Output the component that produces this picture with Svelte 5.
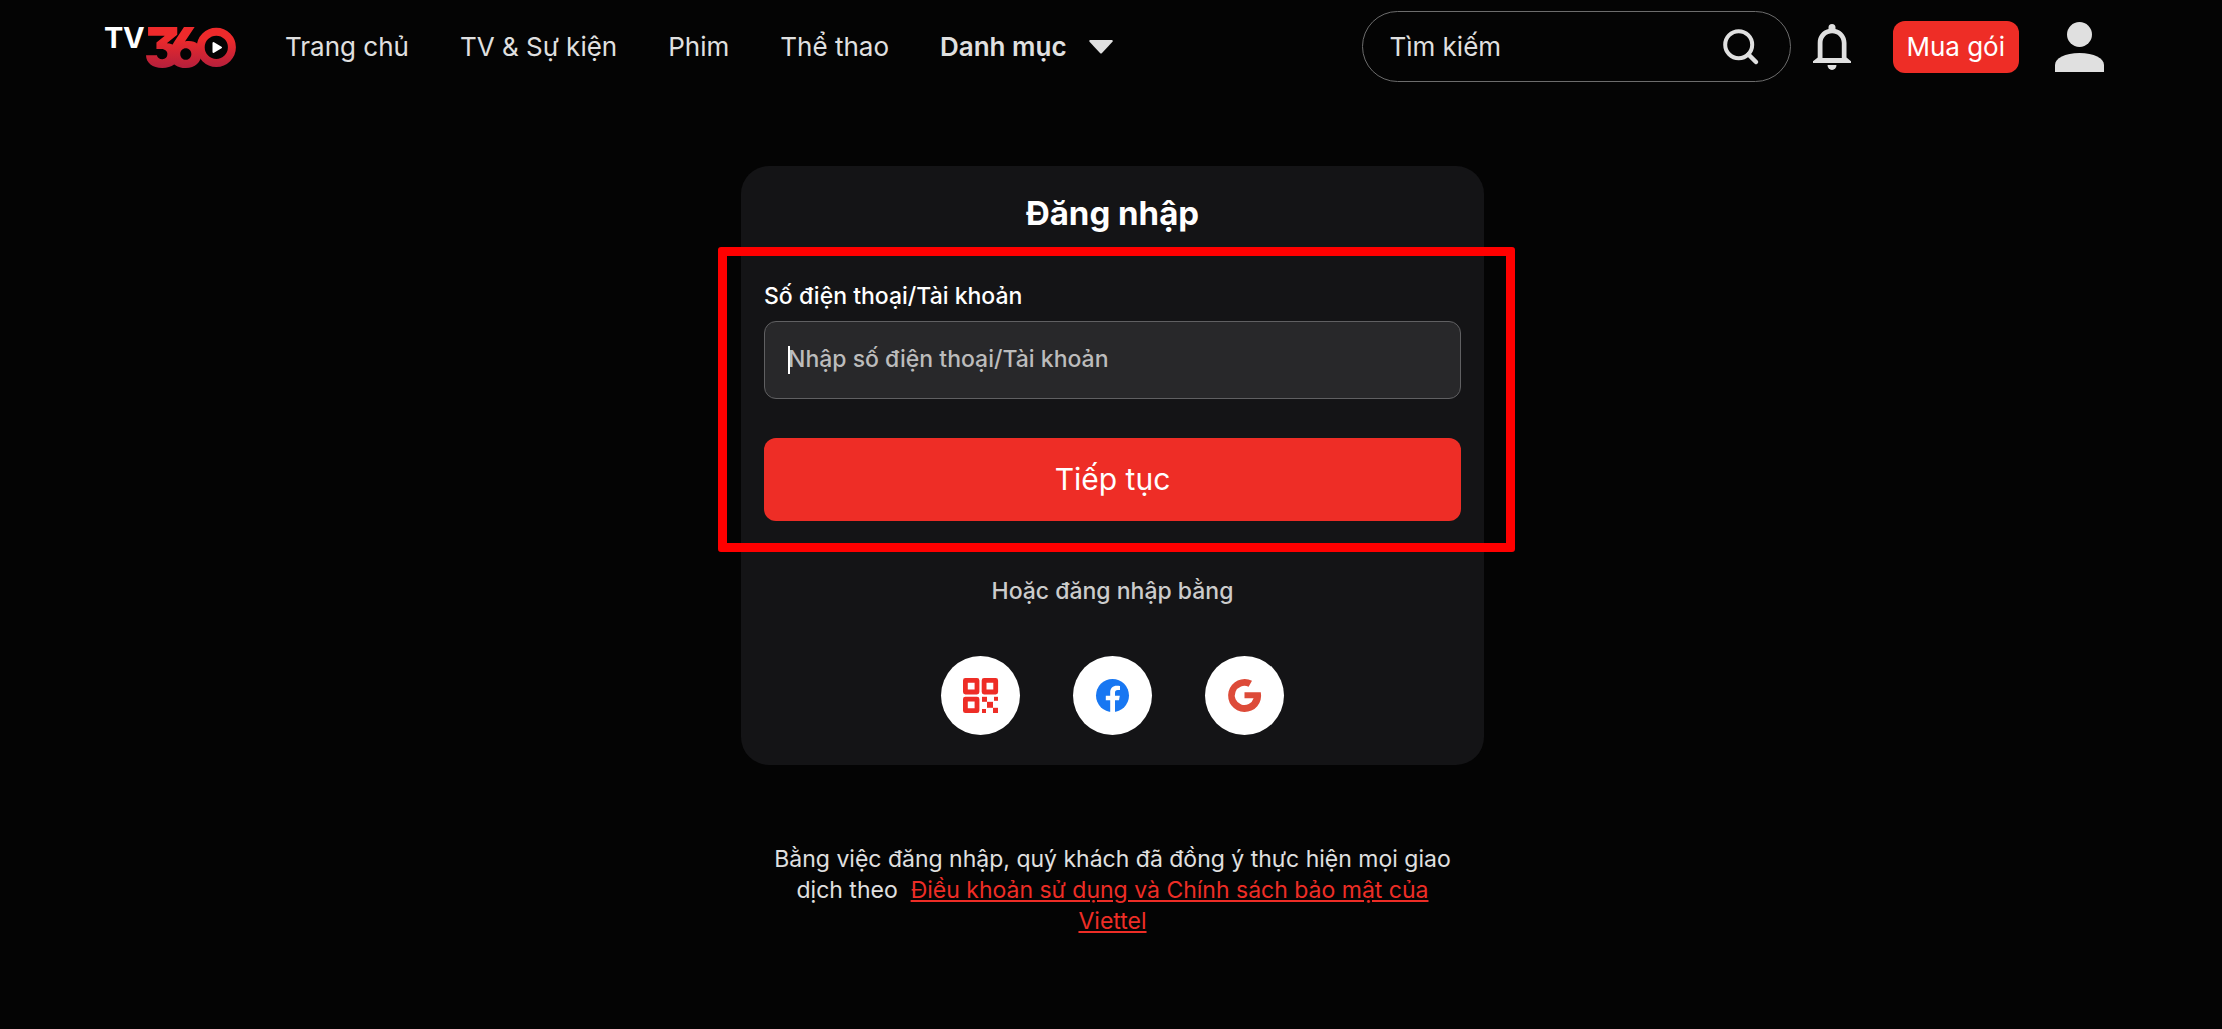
<script lang="ts">
  type NavItem = { label: string; href: string };

  const navItems: NavItem[] = [
    { label: "Trang chủ", href: "#home" },
    { label: "TV & Sự kiện", href: "#tv" },
    { label: "Phim", href: "#movies" },
    { label: "Thể thao", href: "#sports" },
  ];

  let keyword = $state("");
  let account = $state("");

  function submit(event: SubmitEvent) {
    event.preventDefault();
  }
</script>

<header class="header">
  <a class="logo" href="#home" aria-label="TV360">
    <svg width="132" height="42" viewBox="0 0 132 42">
      <defs>
        <linearGradient id="logo-red" gradientUnits="userSpaceOnUse" x1="0" y1="0" x2="0" y2="42">
          <stop offset="0.3" stop-color="#ee2a2b" />
          <stop offset="1" stop-color="#b41f3c" />
        </linearGradient>
      </defs>
      <text class="logo-tv" x="0 19" y="22">TV</text>
      <text class="logo-digits" x="40 64" y="41" fill="url(#logo-red)">36</text>
      <circle cx="112.300" cy="21.300" r="15.600" fill="none" stroke="url(#logo-red)" stroke-width="8" />
      <path d="M109.500 17v9l7.500-4.500z" fill="#fff" stroke="#fff" stroke-width="2" stroke-linejoin="round" />
    </svg>
  </a>

  <nav class="nav">
    {#each navItems as item}
      <a class="nav-link" href={item.href}>{item.label}</a>
    {/each}
    <button class="nav-more" type="button">
      Danh mục
      <svg width="24" height="14" viewBox="0 0 24 14" aria-hidden="true">
        <path d="M1 0h22q1.500 .5.500 1.800L13 13q-1 1-2 0L.5 1.800Q-.5.500 1 0z" fill="#e0e0e0" />
      </svg>
    </button>
  </nav>

  <form class="search" role="search" onsubmit={submit}>
    <input type="text" placeholder="Tìm kiếm" aria-label="Tìm kiếm" bind:value={keyword} />
    <button class="icon-button" type="submit" aria-label="Tìm kiếm">
      <svg width="36" height="36" viewBox="0 0 36 36" fill="none" stroke="#e0e0e0">
        <circle cx="15.700" cy="15.700" r="13.500" stroke-width="4" />
        <path d="M25.500 25.500l7.500 7.500" stroke-width="4.500" stroke-linecap="round" />
      </svg>
    </button>
  </form>

  <button class="icon-button bell" type="button" aria-label="Thông báo">
    <svg width="38" height="46" viewBox="0 0 38 46" fill="#e0e0e0">
      <path
        fill-rule="evenodd"
        d="M15.500 5V3.500a3.500 3.500 0 0 1 7 0V5C29 6.500 33.500 12 33.500 19v14.500l4.500 3.800V39H0v-1.700l4.700-3.800V19C4.700 12 9 6.500 15.500 5zM9.500 34h19.300V19c0-5.500-4.300-9.700-9.700-9.700S9.500 13.500 9.500 19z"
      />
      <path d="M14.500 41h9a4.500 5 0 0 1-9 0z" />
    </svg>
  </button>

  <button class="buy" type="button">Mua gói</button>

  <button class="icon-button avatar" type="button" aria-label="Tài khoản">
    <svg width="49" height="50" viewBox="0 0 49 50" fill="#e0e0e0">
      <circle cx="24.500" cy="12.500" r="12.500" />
      <path d="M0 50V43C0 36 10 31 24.500 31S49 36 49 43v7z" />
    </svg>
  </button>
</header>

<main class="main">
  <section class="card">
    <h1>Đăng nhập</h1>

    <form class="login" onsubmit={submit}>
      <label for="account">Số điện thoại/Tài khoản</label>
      <div class="field">
        <input id="account" type="text" placeholder="Nhập số điện thoại/Tài khoản" bind:value={account} />
        <span class="caret" aria-hidden="true"></span>
      </div>
      <button class="submit" type="submit">Tiếp tục</button>
      <span class="highlight" aria-hidden="true"></span>
    </form>

    <p class="or">Hoặc đăng nhập bằng</p>

    <div class="socials">
      <button class="social" type="button" aria-label="QR">
        <svg width="35" height="35" viewBox="0 0 35 35" fill="#ee2d26">
          <g fill="none" stroke="#ee2d26" stroke-width="4.800" stroke-linejoin="round">
            <rect x="2.400" y="2.400" width="11.600" height="11.600" />
            <rect x="21.100" y="2.400" width="11.600" height="11.600" />
            <rect x="2.400" y="21.100" width="11.600" height="11.600" />
          </g>
          <rect x="19" y="18.800" width="5" height="5" />
          <rect x="31" y="18.800" width="4" height="4" />
          <rect x="24" y="23.800" width="6" height="6" />
          <rect x="19" y="31" width="4" height="4" />
          <rect x="30" y="29.800" width="5" height="5.200" />
        </svg>
      </button>
      <button class="social" type="button" aria-label="Facebook">
        <svg width="33" height="33" viewBox="0 0 33 33">
          <circle cx="16.500" cy="16.500" r="16.500" fill="#1877f2" />
          <path
            d="M14.200 33V21.300H9.800v-4.600h4.400v-3.200c0-4.400 2.600-6.800 6.600-6.800 1.200 0 2.300.1 3.200.3v4.100h-2.200c-2 0-2.800 1-2.800 2.700v2.900h4.800l-.8 4.600h-4V33z"
            fill="#fff"
          />
        </svg>
      </button>
      <button class="social" type="button" aria-label="Google">
        <svg width="33" height="33" viewBox="0 0 33 33">
          <path
            d="M24 1.800A16.500 16.500 0 1 0 32.800 13.300H16.500v5.900h9.100A9.600 9.600 0 1 1 20.600 7.800z"
            fill="#dd4b39"
          />
        </svg>
      </button>
    </div>
  </section>

  <p class="terms">
    Bằng việc đăng nhập, quý khách đã đồng ý thực hiện mọi giao dịch theo&nbsp;
    <a href="#terms">Điều khoản sử dụng và Chính sách bảo mật của Viettel</a>
  </p>
</main>

<style>
  :global(body) {
    background: #040404;
    color: #e0e0e0;
    font-family: Inter, "Noto Sans", sans-serif;
  }
  button,
  input {
    font-family: inherit;
    color: inherit;
  }
  button {
    border: 0;
    padding: 0;
    background: none;
    cursor: pointer;
  }
  svg {
    display: block;
    overflow: visible;
  }
  .header {
    display: flex;
    align-items: center;
    padding: 11px 118px 0 104px;
    font-size: 26px;
    line-height: 32px;
  }
  .logo-tv {
    fill: #fff;
    font-size: 29px;
    font-weight: 700;
  }
  .logo-digits {
    font-size: 55px;
    font-weight: 900;
    font-feature-settings: "cv09", "ss01";
  }
  .nav {
    display: flex;
    align-items: center;
    gap: 51px;
    margin-left: 49px;
    white-space: nowrap;
  }
  .nav-link {
    color: inherit;
    text-decoration: none;
  }
  .nav-more {
    display: flex;
    align-items: center;
    gap: 22px;
    font-size: 26px;
    font-weight: 600;
    line-height: 32px;
  }
  .search {
    display: flex;
    align-items: center;
    box-sizing: border-box;
    width: 429px;
    height: 71px;
    margin-left: auto;
    padding: 0 31px 0 26px;
    border: 1px solid #6c6c6c;
    border-radius: 36px;
  }
  .search input {
    flex: 1;
    min-width: 0;
    padding: 0;
    border: 0;
    outline: 0;
    background: none;
    font-size: 26px;
  }
  .search input::placeholder {
    color: #e0e0e0;
    opacity: 1;
  }
  .bell {
    margin-left: 22px;
  }
  .buy {
    margin-left: 42px;
    padding: 10px 14px 10px 13px;
    border-radius: 12px;
    background: #ee2d26;
    color: #fff;
    font-size: 26px;
    line-height: 32px;
    white-space: nowrap;
  }
  .avatar {
    margin-left: 36px;
  }
  .main {
    display: flex;
    flex-direction: column;
    align-items: center;
    padding: 84px 0 80px 3px;
  }
  .card {
    box-sizing: border-box;
    width: 100%;
    max-width: 743px;
    padding: 27px 23px 30px;
    border-radius: 28px;
    background: #141416;
  }
  h1 {
    margin: 0;
    color: #fff;
    font-size: 33px;
    font-weight: 700;
    line-height: 40px;
    text-align: center;
  }
  .login {
    position: relative;
    display: flex;
    flex-direction: column;
    margin-top: 49px;
  }
  label {
    color: #fff;
    font-size: 23px;
    font-weight: 500;
    line-height: 28px;
  }
  .field {
    position: relative;
    margin-top: 11px;
  }
  .field input {
    box-sizing: border-box;
    display: block;
    width: 100%;
    height: 78px;
    padding: 0 23px 2px;
    border: 1px solid #606062;
    border-radius: 12px;
    outline: 0;
    background: #28282a;
    font-size: 23px;
    font-weight: 500;
  }
  .field input::placeholder {
    color: #bcbcbc;
    opacity: 1;
  }
  .caret {
    position: absolute;
    top: 25px;
    left: 24px;
    width: 2px;
    height: 28px;
    background: #fff;
  }
  .submit {
    height: 83px;
    margin-top: 39px;
    padding-bottom: 2px;
    border-radius: 12px;
    background: #ee2d26;
    color: #fff;
    font-size: 30px;
  }
  /* red frame drawn over the form and past the card's edges */
  .highlight {
    position: absolute;
    inset: -35px -54px -31px -46px;
    border: 9px solid #f00;
    border-radius: 3px;
    pointer-events: none;
  }
  .or {
    margin: 56px 0 0;
    color: #ccc;
    font-size: 23px;
    font-weight: 500;
    line-height: 28px;
    text-align: center;
  }
  .socials {
    display: flex;
    justify-content: center;
    gap: 53px;
    margin-top: 51px;
  }
  .social {
    display: flex;
    align-items: center;
    justify-content: center;
    width: 79px;
    height: 79px;
    border-radius: 50%;
    background: #fff;
  }
  .terms {
    max-width: 697px;
    margin: 79px 0 0;
    font-size: 23px;
    line-height: 31px;
    text-align: center;
  }
  .terms a {
    color: #ee2d26;
  }
</style>
